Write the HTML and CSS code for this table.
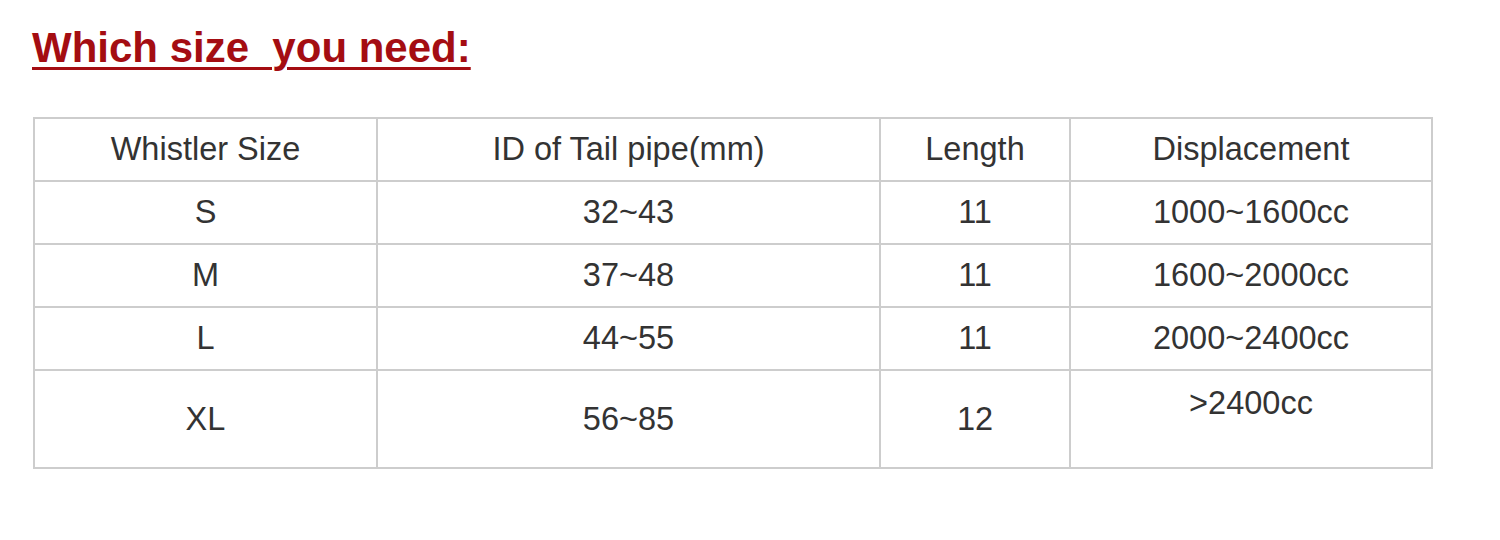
FILE: index.html
```html
<!DOCTYPE html>
<html>
<head>
<meta charset="utf-8">
<link rel="stylesheet" href="styles.css">
</head>
<body>
<h1 class="title">Which size&nbsp; you need:</h1>
<table class="sizes">
  <colgroup>
    <col class="c1"><col class="c2"><col class="c3"><col class="c4">
  </colgroup>
  <tr><td>Whistler Size</td><td>ID of Tail pipe(mm)</td><td>Length</td><td>Displacement</td></tr>
  <tr><td>S</td><td>32~43</td><td>11</td><td>1000~1600cc</td></tr>
  <tr><td>M</td><td>37~48</td><td>11</td><td>1600~2000cc</td></tr>
  <tr><td>L</td><td>44~55</td><td>11</td><td>2000~2400cc</td></tr>
  <tr class="last"><td>XL</td><td>56~85</td><td>12</td><td class="top">&gt;2400cc</td></tr>
</table>
</body>
</html>
```
FILE: styles.css
```css
html, body {
  margin: 0;
  background: #fff;
}
body {
  padding: 24px 0 0 32px;
  font-family: "Liberation Sans", Arial, sans-serif;
}
.title {
  margin: 0 0 45px 0;
  font-size: 42px;
  line-height: 48px;
  font-weight: bold;
  color: #a40d12;
  text-decoration: underline;
  text-decoration-thickness: 3px;
  text-underline-offset: 5px;
}
.sizes {
  margin-left: 1px;
  border-collapse: collapse;
  width: 1398px;
  table-layout: fixed;
  color: #333;
  font-size: 32.5px;
}
.c1 { width: 343px; }
.c2 { width: 503px; }
.c3 { width: 190px; }
.c4 { width: 362px; }
.sizes td {
  border: 2px solid #cdcdcd;
  height: 61px;
  padding: 0;
  text-align: center;
  vertical-align: middle;
}
.sizes tr.last td {
  height: 96px;
}
.sizes tr.last td.top {
  vertical-align: top;
  padding-top: 14px;
  height: 82px;
}
```
